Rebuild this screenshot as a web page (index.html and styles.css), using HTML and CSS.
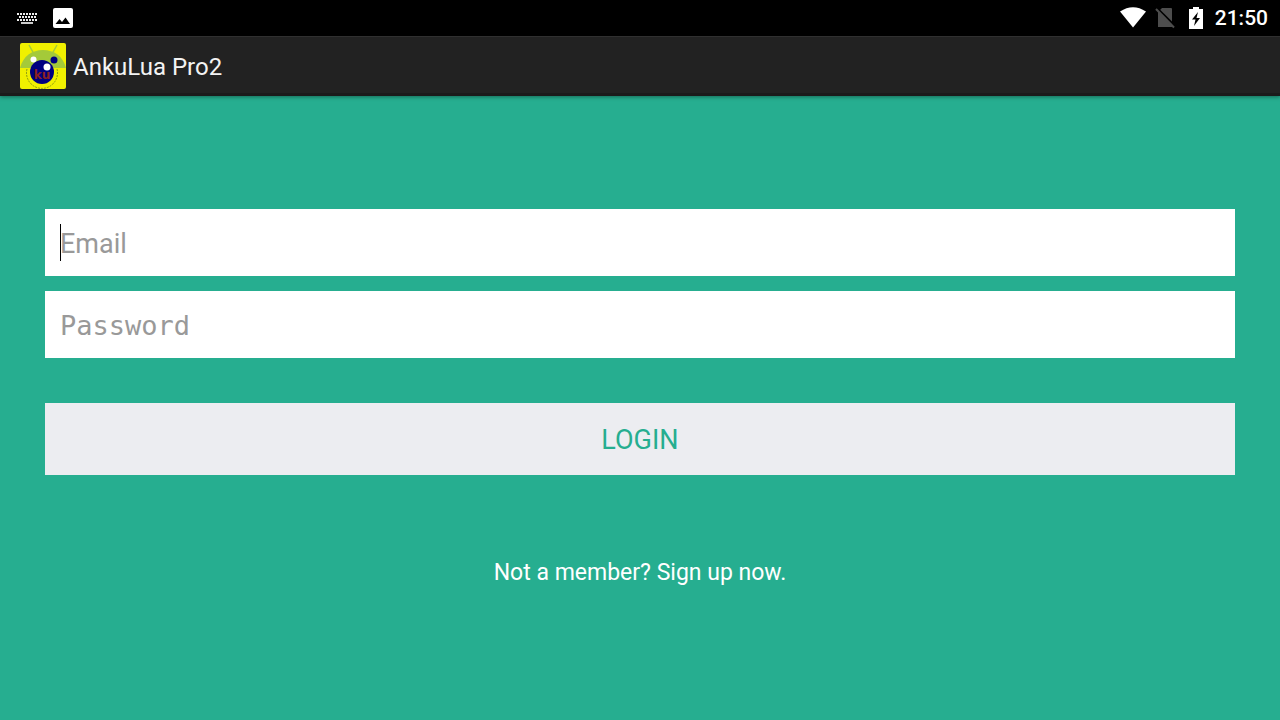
FILE: index.html
```html
<!DOCTYPE html>
<html lang="en">
<head>
<meta charset="utf-8">
<meta name="viewport" content="width=device-width, initial-scale=1">
<title>AnkuLua Pro2</title>
<link rel="stylesheet" href="styles.css">
</head>
<body>
<div class="status">
  <div class="status-group notices">
    <svg width="22" height="14" viewBox="0 0 22 14" aria-hidden="true">
      <path d="M1 3H21M3 6H20M1 9H21" stroke="#eee" stroke-width="2" stroke-dasharray="2 1"/>
      <path d="M5 12H17" stroke="#ccc" stroke-width="2"/>
    </svg>
    <svg width="20" height="20" viewBox="0 0 20 20" aria-hidden="true">
      <rect width="20" height="20" rx="2" fill="#fff"/>
      <path d="M2.500 16L6.500 11L9 14L12.500 9.500L17 16Z" fill="#000"/>
    </svg>
  </div>
  <div class="status-group system">
    <svg width="26" height="21" viewBox="0 0 26 21" aria-hidden="true">
      <path d="M0 4.500Q13-4 26 4.500L13 20.500Z" fill="#fff"/>
    </svg>
    <svg class="sim" width="20" height="22" viewBox="0 0 20 22" aria-hidden="true">
      <path d="M7 1H16Q17 1 17 2V20H3V5Z" fill="#4d4d4d"/>
      <path d="M2 1L20 19" stroke="#000" stroke-width="2"/>
      <path d="M1 2L19 20.500" stroke="#4d4d4d" stroke-width="2"/>
    </svg>
    <svg class="battery" width="14" height="22" viewBox="0 0 14 22" aria-hidden="true">
      <path d="M0 2H4V0H10V2H14V22H0Z" fill="#fff"/>
      <path d="M9 5L3 12.500H6.500L5 19L11 11H7.500Z" fill="#000"/>
    </svg>
    <time class="clock">21:50</time>
  </div>
</div>
<header class="bar">
  <svg class="logo" width="48" height="48" viewBox="0 0 48 48" aria-hidden="true">
    <rect x="1" y="1" width="46" height="46" rx="2" fill="#f0f000"/>
    <path d="M10 3L15 12M38 3L33 12" stroke="#a4ca39" stroke-width="1.500"/>
    <path d="M1 26C4 14 13 8 24 8S44 14 47 26Z" fill="#a4ca39"/>
    <path d="M8 27A15.500 15.500 0 1 0 38 27" fill="none" stroke="#8b9a10" stroke-dasharray="2 1"/>
    <circle cx="14.500" cy="17.500" r="3" fill="#fff"/>
    <circle cx="35" cy="18" r="3.500" fill="#000080"/>
    <circle cx="23" cy="30" r="12" fill="#000080"/>
    <circle cx="28" cy="25" r="3.500" fill="#fff"/>
    <text class="logo-text" x="23" y="37" text-anchor="middle" fill="#8b2020">ku</text>
  </svg>
  <h1 class="title">AnkuLua Pro2</h1>
</header>
<main class="main">
  <form class="form">
    <div class="field">
      <input class="input" type="email" placeholder="Email" aria-label="Email">
      <span class="caret"></span>
    </div>
    <div class="field">
      <input class="input mono" type="password" placeholder="Password" aria-label="Password">
    </div>
    <button class="login" type="button">LOGIN</button>
  </form>
  <a class="signup" href="#">Not a member? Sign up now.</a>
</main>
</body>
</html>
```
FILE: styles.css
```css
* { box-sizing: border-box; }
body {
  margin: 0;
  min-height: 100vh;
  display: flex;
  flex-direction: column;
  background: #26ae90;
  font-family: Roboto, sans-serif;
}
.status {
  height: 36px;
  display: flex;
  align-items: center;
  justify-content: space-between;
  padding: 0 12px 0 16px;
  background: #000;
  color: #fff;
}
.status-group { display: flex; align-items: center; }
.system { padding-bottom: 1px; }
.notices { gap: 15px; }
.sim { margin-left: 9px; }
.battery { margin-left: 14px; }
.clock {
  margin-left: 12px;
  font-size: 21px;
  line-height: 36px;
  padding-top: 1px;
  font-weight: 500;
}
.bar {
  height: 60px;
  display: flex;
  align-items: center;
  gap: 6px;
  padding: 2px 0 0 19px;
  background: #222;
  border-top: 1px solid #303030;
  border-bottom: 3px solid #1b1b1b;
  box-shadow: 0 1px 4px rgba(0, 0, 0, 0.4);
}
.logo { flex: none; }
.logo-text { font: bold 12px "DejaVu Sans", sans-serif; }
.title {
  margin: 0;
  padding-top: 2px;
  font-size: 24px;
  line-height: 32px;
  font-weight: 400;
  color: #f3f3f3;
}
.main {
  flex: 1;
  display: flex;
  flex-direction: column;
  align-items: center;
  padding: 113px 45px 45px;
}
.form {
  width: 100%;
  display: flex;
  flex-direction: column;
  gap: 15px;
}
.field { position: relative; display: flex; }
.input {
  width: 100%;
  height: 67px;
  padding: 2px 15px 0;
  border: 0;
  border-radius: 0;
  outline: 0;
  background: #fff;
  color: #000;
  font: 400 27px Roboto, sans-serif;
}
.mono { font-family: "DejaVu Sans Mono", monospace; }
.input::placeholder { color: #999; opacity: 1; }
.caret {
  position: absolute;
  left: 15px;
  top: 15px;
  width: 1px;
  height: 37px;
  background: #000;
}
.login {
  height: 72px;
  margin-top: 30px;
  padding: 2px 0 0;
  border: 0;
  background: #ecedf1;
  color: #26ae90;
  font: 400 27px Roboto, sans-serif;
}
.signup {
  margin-top: 82px;
  font-size: 23px;
  line-height: 32px;
  color: #fff;
  text-decoration: none;
}
```
